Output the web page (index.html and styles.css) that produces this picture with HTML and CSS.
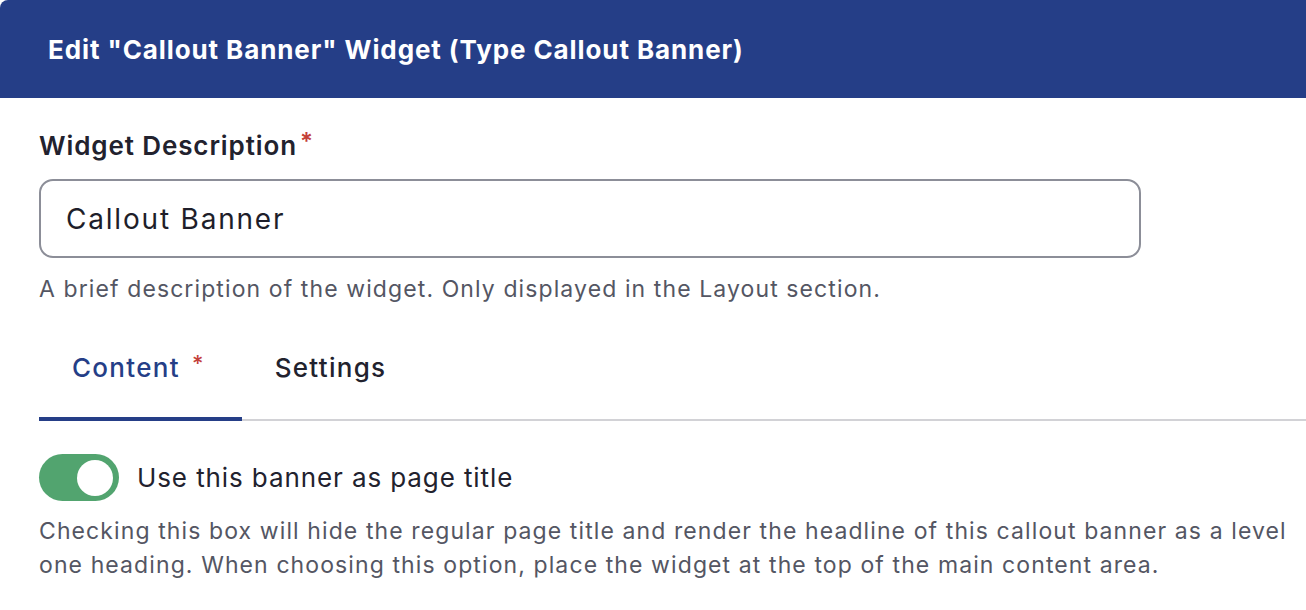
FILE: index.html
```html
<!DOCTYPE html>
<html lang="en">
<head>
  <meta charset="UTF-8" />
  <meta name="viewport" content="width=device-width, initial-scale=1" />
  <title>Edit Widget</title>
  <link rel="stylesheet" href="styles.css">
</head>
<body>

  <header class="dialog-header">
    <h1>Edit "Callout Banner" Widget (Type Callout Banner)</h1>
  </header>

  <main class="dialog-body">
    <div class="field">
      <label for="description" class="field-label">Widget Description<span class="required">*</span></label>
      <input type="text" id="description" class="text-input" value="Callout Banner" />
      <p class="help">A brief description of the widget. Only displayed in the Layout section.</p>
    </div>

    <nav class="tabs">
      <a class="tab active">Content<span class="required">*</span></a>
      <a class="tab">Settings</a>
    </nav>

    <div class="toggle-field">
      <label class="toggle-row">
        <span class="toggle on"><span class="knob"></span></span>
        <span class="toggle-label">Use this banner as page title</span>
      </label>
      <p class="help">Checking this box will hide the regular page title and render the headline of this callout banner as a level one heading. When choosing this option, place the widget at the top of the main content area.</p>
    </div>
  </main>

</body>
</html>
```

FILE: styles.css
```css
body {
  font-family: Inter, 'Noto Sans', sans-serif;
  background: #ffffff;
  color: #22222e;
  margin: 0;
  padding: 0;
}

.dialog-header {
  background: #253e87;
  color: white;
  height: 98px;
  padding: 0 48px;
  display: flex;
  align-items: center;
  border-top-left-radius: 8px;
}

.dialog-header h1 {
  margin: 0;
  font-size: 26px;
  font-weight: 700;
  letter-spacing: 0.9px;
}

.dialog-body {
  padding: 0 0 0 39px;
}

.field {
  padding-top: 30px;
}

.field-label {
  display: block;
  font-size: 26px;
  font-weight: 600;
  line-height: 36px;
  letter-spacing: 0.9px;
  margin-bottom: 14px;
}

.required {
  color: #c4403a;
  position: relative;
}

.field-label .required {
  margin-left: 3px;
  font-size: 24px;
  top: -5px;
}

.text-input {
  display: block;
  box-sizing: border-box;
  width: 1102px;
  height: 79px;
  padding: 0 25px;
  border: 2px solid #8c8e98;
  border-radius: 14px;
  font-family: inherit;
  font-size: 28px;
  letter-spacing: 1.8px;
  color: #1e1e2a;
  outline: none;
}

.help {
  margin: 14px 0 0;
  font-size: 23px;
  line-height: 34px;
  letter-spacing: 1.1px;
  color: #545663;
}

.tabs {
  display: flex;
  margin-top: 24px;
  border-bottom: 2px solid #d2d2d6;
}

.tab {
  padding: 20px 33px 30px;
  font-size: 26px;
  font-weight: 500;
  line-height: 36px;
  letter-spacing: 1.3px;
  color: #22222e;
  margin-bottom: -2px;
  border-bottom: 4px solid transparent;
}

.tab.active {
  color: #253e87;
  border-bottom-color: #253e87;
  padding-right: 37px;
}

.tab .required {
  margin-left: 12px;
  font-size: 22px;
  top: -6px;
}

.toggle-field {
  padding-top: 33px;
}

.toggle-row {
  display: flex;
  align-items: center;
  gap: 18px;
}

.toggle {
  width: 80px;
  height: 47px;
  border-radius: 24px;
  background: #c7c8cc;
  display: flex;
  align-items: center;
  padding: 0 6px;
  box-sizing: border-box;
}

.toggle.on {
  background: #52a46f;
  justify-content: flex-end;
}

.knob {
  width: 36px;
  height: 36px;
  border-radius: 50%;
  background: white;
}

.toggle-label {
  font-size: 26px;
  line-height: 36px;
  letter-spacing: 0.9px;
}

.toggle-field .help {
  margin-top: 13px;
  padding-right: 8px;
}
```
